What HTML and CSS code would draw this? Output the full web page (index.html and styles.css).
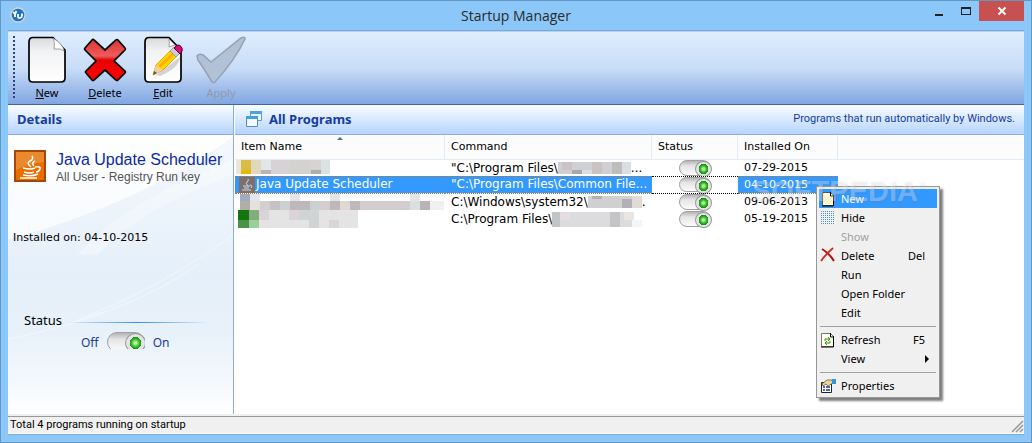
FILE: index.html
```html
<!DOCTYPE html>
<html lang="en">
<head>
  <meta charset="UTF-8" />
  <meta name="viewport" content="width=device-width, initial-scale=1.0" />
  <title>Startup Manager</title>
  <link rel="stylesheet" href="styles.css">
</head>
<body>
  <div class="window">
    <header class="titlebar">
      <svg class="app-icon" width="16" height="16" viewBox="0 0 16 16">
        <circle cx="8" cy="8" r="7.8" fill="#d5d2cd"/>
        <circle cx="8" cy="8" r="6.3" fill="#1b73c9"/>
        <path d="M3 5l2 2.2L6.500 4M5 7v3M8 7v2.500q0 2 2 1.500t2-2V6.500" fill="none" stroke="#fff" stroke-width="1.800"/>
      </svg>
      <h1>Startup Manager</h1>
      <div class="window-buttons">
        <button class="win-btn" aria-label="Minimize"><svg width="8" height="10"><path d="M0 8h8v2H0z" fill="#222"/></svg></button>
        <button class="win-btn" aria-label="Maximize"><svg width="10" height="8"><path d="M0 0h10v8H0zM1 2v5h8V2z" fill="#222" fill-rule="evenodd"/></svg></button>
        <button class="win-btn close" aria-label="Close"><svg width="8" height="8"><path d="M0.500 0.500l7 7M7.500 0.500l-7 7" stroke="#fff" stroke-width="1.900"/></svg></button>
      </div>
    </header>

    <div class="client">
      <nav class="toolbar">
        <button class="tool">
          <svg width="40" height="48" viewBox="0 0 40 48">
            <defs><linearGradient id="paper" x1="0" y1="0" x2="0" y2="1"><stop offset="0" stop-color="#d9dadb"/><stop offset=".3" stop-color="#f1f2f3"/><stop offset="1" stop-color="#fff"/></linearGradient></defs>
            <path d="M6 1.500h20L38 14v28q0 4-4 4H6q-4 0-4-4V6q0-4.500 4-4.500z" fill="url(#paper)" stroke="#000" stroke-width="1.700"/>
            <path d="M26 2q2 3 1 11q7-1 10 2q-1-7-11-13z" fill="#fff" stroke="#8a8d91" stroke-width=".8"/>
          </svg>
          <span><u>N</u>ew</span>
        </button>
        <button class="tool">
          <svg width="44" height="48" viewBox="0 0 44 48">
            <defs><linearGradient id="red" x1="0" y1="0" x2="0" y2="1"><stop offset="0" stop-color="#d33"/><stop offset=".4" stop-color="#ed5c5c"/><stop offset=".5" stop-color="#e60505"/><stop offset="1" stop-color="#f00"/></linearGradient></defs>
            <path d="M2 12L9 4q1-1 2 0l11 10L33 4q1-1 2 0l7 8q1 1 0 2L31 25l11 10q1 1 0 2l-7 7q-1 1-2 0L22 34 11 44q-1 1-2 0l-6-7q-1-1 0-2l10-10L2 14q-1-1 0-2z" fill="url(#red)" stroke="#000" stroke-width="1.700"/>
          </svg>
          <span><u>D</u>elete</span>
        </button>
        <button class="tool">
          <svg width="40" height="48" viewBox="0 0 40 48">
            <path d="M6 1.500h20L38 14v28q0 4-4 4H6q-4 0-4-4V6q0-4.500 4-4.500z" fill="url(#paper)" stroke="#000" stroke-width="1.700"/>
            <path d="M25 2q2 2 1 9l6-2z" fill="#fff" stroke="#8a8d91" stroke-width=".8"/>
            <path d="M13 39l24-18q-1 11-20 19z" fill="#bbb" opacity=".6"/>
            <path d="M10 39l3-10L28 14l6 6L20 34z" fill="#ffd400" stroke="#d79b00" stroke-width=".8"/>
            <path d="M16 31l15-14" stroke="#ffb300" stroke-width="3"/>
            <path d="M10 39l3-10 7 5z" fill="#efcf9d"/><path d="M10 39l1-4 3 2z" fill="#555"/>
            <path d="M27 15l4-4 6 6-4 4z" fill="#c5ccd7" stroke="#888" stroke-width=".7"/>
            <path d="M31 12q4-5 7-1.500t-1 7.500z" fill="#e00b7a" stroke="#47002a"/>
          </svg>
          <span><u>E</u>dit</span>
        </button>
        <button class="tool" disabled>
          <svg width="48" height="48" viewBox="0 0 48 48">
            <path d="M1 24L0 20q2-3 6-1l8 7L44 2q4-2 4 1Q38 24 18 46q-2 1-3 0Q8 34 1 24z" fill="#b3c1d6" stroke="#97a3b4" stroke-width="1.600"/>
          </svg>
          <span>Apply</span>
        </button>
      </nav>

      <div class="panels">
        <aside class="details">
          <h2 class="panel-head">Details</h2>
          <div class="details-body">
            <svg class="swoosh" viewBox="0 0 225 280" preserveAspectRatio="none">
              <defs><linearGradient id="sky" x1="0" y1="0" x2="0" y2="1"><stop offset="0" stop-color="#dceaf7" stop-opacity=".3"/><stop offset=".5" stop-color="#dceaf7" stop-opacity=".6"/><stop offset="1" stop-color="#dceaf7" stop-opacity="0"/></linearGradient></defs>
              <path d="M0 105Q130 70 225 2V280H0z" fill="url(#sky)"/>
              <path d="M70 120Q110 70 225 25V40Q130 75 90 120z" fill="#fff" opacity=".3"/>
              <path d="M60 190Q160 150 225 100M0 205Q120 180 190 130" fill="none" stroke="#fff" opacity=".4"/>
            </svg>
            <div class="program">
              <svg width="32" height="32" viewBox="0 0 32 32">
                <rect x="1" y="1" width="30" height="30" fill="#e76f00" stroke="#a84508" stroke-width="2"/>
                <path d="M2 2h28v10Q14 14 2 20z" fill="#fff" opacity=".18"/>
                <path d="M18 6q2 3-2 5t1 6M21 11q-4 2-1 5M9 18q8 2 12 0M10 22q6 2 10 0M21 17q6-1 5 2t-4 3M9 25q8 2 15-1M6 28h17" fill="none" stroke="#fff" stroke-width="1.500"/>
              </svg>
              <div>
                <h3>Java Update Scheduler</h3>
                <p>All User - Registry Run key</p>
              </div>
            </div>
            <p class="installed">Installed on: 04-10-2015</p>
            <div class="status-head"><span>Status</span><i></i></div>
            <label class="switch-row">Off <span class="clip"><input type="checkbox" class="switch big" aria-label="Status" checked></span> On</label>
          </div>
        </aside>

        <main class="programs">
          <div class="panel-head">
            <svg width="16" height="16" viewBox="0 0 16 16">
              <path d="M4.500.5h11v9h-11z" fill="#e9f6ff" stroke="#5a9fd0"/><path d="M4 0h12v3H4z" fill="#4ba4de"/>
              <path d="M.5 5.500h11v10H.5z" fill="#f3faff" stroke="#5e8dae"/><path d="M0 5h12v3H0z" fill="#41a2dc"/>
            </svg>
            <h2>All Programs</h2>
            <span class="hint">Programs that run automatically by Windows.</span>
          </div>
          <table>
            <colgroup><col class="c-name"><col class="c-command"><col class="c-status"><col class="c-date"><col></colgroup>
            <thead>
              <tr><th class="sorted">Item Name</th><th>Command</th><th>Status</th><th>Installed On</th><th></th></tr>
            </thead>
            <tbody>
              <tr>
                <td class="name"><svg class="mosaic" width="94" height="16">
                  <path d="M0 0h5v14H0z" fill="#ebe6db"/><path d="M5 0h10v10H5z" fill="#d9bd43"/><path d="M5 10h10v4H5z" fill="#e7b900"/><path d="M15 0h10v14H15z" fill="#dfd8bd"/><path d="M25 0h10v10H25z" fill="#e3e6e8"/><path d="M25 10h10v4H25z" fill="#bbb4b6"/><path d="M35 0h20v14H35z" fill="#d7d2d5"/><path d="M55 0h20v14H55z" fill="#d4d2d1"/><path d="M75 0h10v10H75z" fill="#d7d3d2"/><path d="M75 10h10v4H75z" fill="#adadad"/><path d="M85 0h9v14h-9z" fill="#dce1e4"/>
                </svg></td>
                <td>"C:\Program Files\<svg class="mosaic" width="73" height="12"><path d="M0 0h73v12H0z" fill="#d0d0d4"/><path d="M4 0h10v8H4zM34 0h10v12H34z" fill="#cbc2c3"/><path d="M14 8h10v4H14z" fill="#a9a9ac"/><path d="M24 8h10v4H24zM64 0h9v12h-9z" fill="#d9dfe2"/><path d="M54 0h10v12H54z" fill="#bdbdbd"/></svg>...</td>
                <td class="state"><input type="checkbox" class="switch" aria-label="First program status" checked></td>
                <td>07-29-2015</td><td></td>
              </tr>
              <tr class="selected">
                <td class="name"><svg class="java" width="16" height="16" viewBox="0 0 16 16"><path d="M0 0h16v16H0z" fill="#806e6b"/><path d="M9 2q1 2-1 3t1 4M4 9h7M5 11h5M11 8q3 0 1 3M3 13h9" fill="none" stroke="#c6def7"/></svg><span>Java Update Scheduler</span></td>
                <td>"C:\Program Files\Common File...</td>
                <td class="state"><input type="checkbox" class="switch" aria-label="Java Update Scheduler status" checked></td>
                <td>04-10-2015</td><td></td>
              </tr>
              <tr>
                <td class="name"><svg class="mosaic long" width="208" height="16">
                  <path d="M4 0h10v7H4z" fill="#9eabc1"/><path d="M4 7h10v9H4z" fill="#b1aea8"/><path d="M14 0h10v7H14z" fill="#e2e5e9"/><path d="M14 7h10v9H14z" fill="#e6e1dc"/><path d="M24 7h10v9H24z" fill="#d3cfd0"/><path d="M34 7h10v9H34z" fill="#c7c1c5"/><path d="M44 7h10v9H44zM74 7h10v9H74zM164 7h10v9h-10z" fill="#ccd0d2"/><path d="M54 7h20v9H54zM94 7h10v9H94zM114 7h10v9h-10z" fill="#beb7bb"/><path d="M84 7h10v9H84zM124 7h60v9h-60z" fill="#d3cdd2"/><path d="M104 7h10v9h-10z" fill="#e0d9d3"/><path d="M174 7h10v9h-10z" fill="#d9e0e3"/><path d="M184 7h10v9h-10z" fill="#b9b3b7"/><path d="M194 7h14v9h-14z" fill="#eff0f1"/><path d="M54 0h10v7H54zM94 0h10v7H94zM174 0h10v7h-10z" fill="#e5e3e4"/>
                </svg></td>
                <td>C:\Windows\system32\<svg class="mosaic" width="54" height="12"><path d="M0 0h54v12H0z" fill="#d1d0d1"/><path d="M4 0h10v3H4zM34 3h10v9H34z" fill="#b5b0b5"/><path d="M44 0h10v12H44z" fill="#e1dbd7"/></svg>.</td>
                <td class="state"><input type="checkbox" class="switch" aria-label="Third program status" checked></td>
                <td>09-06-2013</td><td></td>
              </tr>
              <tr>
                <td class="name"><svg class="mosaic tall" width="122" height="18">
                  <path d="M2 0h11v10H2z" fill="#16740f"/><path d="M2 10h11v8H2z" fill="#469444"/><path d="M13 0h10v10H13z" fill="#82ad7d"/><path d="M13 10h10v8H13z" fill="#9cce9a"/><path d="M23 0h99v18H23z" fill="#e4e4e5"/><path d="M23 0h10v10H23zM53 0h10v10H53zM93 10h10v8H93z" fill="#d9d4d8"/><path d="M63 0h20v10H63zM73 10h10v8H73z" fill="#d1d4d5"/>
                </svg></td>
                <td>C:\Program Files\<svg class="mosaic tall" width="90" height="15"><path d="M0 0h82v8H0zM0 8h90v7H0z" fill="#dcdcdf"/><path d="M0 0h8v15H0zM58 0h10v15H58z" fill="#c4c4c7"/><path d="M8 0h10v8H8z" fill="#e5dddf"/><path d="M72 0h10v8H72z" fill="#e8e5e2"/><path d="M80 8h10v7H80z" fill="#f3f6f8"/></svg></td>
                <td class="state"><input type="checkbox" class="switch" aria-label="Fourth program status" checked></td>
                <td>05-19-2015</td><td></td>
              </tr>
            </tbody>
          </table>
        </main>
      </div>

      <footer class="statusbar">Total 4 programs running on startup
        <svg width="12" height="12"><path d="M1 12L12 1M5 12l7-7M9 12l3-3" stroke="#999" stroke-width="1.500"/></svg>
      </footer>
    </div>

    <div class="menu" role="menu">
      <button class="active" role="menuitem"><svg width="16" height="16" viewBox="0 0 16 16"><path d="M2.500 1.500h8l3 3v10h-11z" fill="#fffde0" stroke="#555"/><path d="M10.500 1v4h4M13.500 4v11H2" fill="none" stroke="#000"/><path d="M4 11l6-6M5 13l7-7M8 13l4-4" stroke="#f2eb95"/></svg>New</button>
      <button role="menuitem"><svg width="16" height="16" viewBox="0 0 16 16"><path d="M1.500 1v14M3.500 1v14M5.500 1v14M7.500 1v14M9.500 1v14M11.500 1v14M13.500 1v14" stroke="#4f91b8" stroke-dasharray="1 1"/></svg>Hide</button>
      <button role="menuitem" disabled><svg width="16" height="16"></svg>Show</button>
      <button role="menuitem"><svg width="16" height="16" viewBox="0 0 16 16"><path d="M2 1q7 4 12 12" fill="none" stroke="#b3130a" stroke-width="2"/><path d="M13 0Q6 6 1 13" fill="none" stroke="#d42a1b" stroke-width="1.800"/></svg>Delete<kbd>Del</kbd></button>
      <button role="menuitem"><svg width="16" height="16"></svg>Run</button>
      <button role="menuitem"><svg width="16" height="16"></svg>Open Folder</button>
      <button role="menuitem"><svg width="16" height="16"></svg>Edit</button>
      <hr>
      <button role="menuitem"><svg width="16" height="16" viewBox="0 0 16 16"><path d="M1.500 1.500h9l3 3v10h-12z" fill="#fffff0" stroke="#777"/><path d="M10.500 1v4h3M13.500 4v11H1" fill="none" stroke="#000"/><path d="M5 9V7h4M8 5l2 2-2 2M10 9v2H6M7 9l-2 2 2 2" fill="none" stroke="#388a12"/></svg>Refresh<kbd>F5</kbd></button>
      <button role="menuitem"><svg width="16" height="16"></svg>View<svg class="arrow" width="4" height="8"><path d="M0 0l4 4-4 4z"/></svg></button>
      <hr>
      <button role="menuitem"><svg width="16" height="16" viewBox="0 0 16 16"><path d="M1.500 4.500h10v10h-10z" fill="#fff" stroke="#222"/><path d="M3 9h2M6 9h4M3 12h2M6 12h4" stroke="#1634a5" stroke-width="1.500"/><path d="M2 6l5-4h5l1 3-5 3-2-2-3 2z" fill="#e6d7a0" stroke="#765f25" stroke-width=".8"/><path d="M12 1h4v5h-4z" fill="#2c95e6"/></svg>Properties</button>
    </div>
    <div class="watermark">SOFTPEDIA<sup>®</sup></div>
  </div>
</body>
</html>
```
FILE: styles.css
```css
* {
  box-sizing: border-box;
}
body {
  margin: 0;
  font-family: "DejaVu Sans", Verdana, sans-serif;
  font-size: 12px;
  color: #000;
}
h1, h2, h3, p {
  margin: 0;
  font-weight: normal;
}
button {
  padding: 0;
  border: none;
  background: none;
  color: inherit;
  font: inherit;
}
svg {
  flex: none;
  overflow: visible;
}

.window {
  position: relative;
  display: flex;
  flex-direction: column;
  min-height: 100vh;
  padding: 0 7px 7px;
  border: 1px solid #6496c4;
  background: #8cc7fa;
}
.titlebar {
  display: grid;
  grid-template-columns: 1fr auto 1fr;
  height: 29px;
}
.app-icon {
  margin: 6px 2px;
}
.titlebar h1 {
  font: 14px/29px "Open Sans", "Segoe UI", sans-serif;
  color: #2b2b2b;
}
.window-buttons {
  display: flex;
  justify-content: flex-end;
}
.win-btn {
  display: flex;
  align-items: center;
  justify-content: center;
  width: 27px;
  height: 20px;
}
.win-btn.close {
  width: 45px;
  background: #c75050;
}

.client {
  display: flex;
  flex: 1;
  flex-direction: column;
  border: 1px solid #7ba9d8;
  border-width: 1px 0;
  background: #fff;
}
.toolbar {
  position: relative;
  display: flex;
  height: 74px;
  padding: 4px 0 0 10px;
  border-top: 1px solid #b7d0ef;
  border-bottom: 1px solid #3f66a8;
  background: linear-gradient(#dfedff, #c9ddf7 50%, #81a6e2);
}
.toolbar::before {
  content: "";
  position: absolute;
  left: 5px;
  top: 4px;
  bottom: 6px;
  width: 2px;
  background: repeating-linear-gradient(#274787 0 2px, transparent 2px 4px);
}
.tool {
  display: flex;
  flex-direction: column;
  align-items: center;
  width: 58px;
  font: 11px/18px "Noto Sans", "Segoe UI", sans-serif;
}
.tool svg {
  height: 48px;
}
.tool:disabled {
  color: #929aa8;
}

.panels {
  display: grid;
  flex: 1;
  grid-template-columns: 226px 1fr;
  column-gap: 1px;
}
.details {
  display: flex;
  flex-direction: column;
  border-right: 1px solid #8fabe6;
}
.panel-head {
  display: flex;
  align-items: center;
  gap: 7px;
  height: 30px;
  padding: 0 9px 2px;
  border-bottom: 1px solid #8fabe8;
  background: linear-gradient(#fafdff, #b5d4ff);
  color: #173da0;
  font: bold 13px/16px "Noto Sans", Tahoma, sans-serif;
}
.programs .panel-head {
  padding-left: 11px;
}
.panel-head h2 {
  font: inherit;
}
.hint {
  margin-left: auto;
  font: 11px/16px Roboto, Tahoma, sans-serif;
}
.details-body {
  position: relative;
  flex: 1;
  background: linear-gradient(#fff, #f5f9fe 45%, #eef5fc 70%, #fff);
}
.swoosh {
  position: absolute;
  inset: 0;
  width: 100%;
  height: 100%;
}
.program {
  position: relative;
  display: flex;
  gap: 10px;
  padding: 15px 0 0 6px;
  white-space: nowrap;
}
.program h3 {
  font: 16px/20px "Liberation Sans", Arial, sans-serif;
  color: #0a2ba3;
}
.program p {
  font: 12px/14px "Liberation Sans", Arial, sans-serif;
  color: #555;
}
.installed {
  position: relative;
  margin: 46px 0 0 5px;
  font-size: 11px;
  line-height: 16px;
}
.status-head {
  position: relative;
  display: flex;
  align-items: center;
  gap: 4px;
  margin: 64px 24px 0 16px;
  font: 13px/20px "Noto Sans", "Segoe UI", sans-serif;
}
.status-head i {
  flex: 1;
  height: 1px;
  margin-top: 4px;
  background: linear-gradient(90deg, rgba(43, 145, 239, 0), #2b91ef, rgba(43, 145, 239, 0));
}
.switch-row {
  position: relative;
  display: flex;
  align-items: center;
  gap: 8px;
  margin: 2px 0 0 73px;
  font: 12px/22px "Noto Sans", "Segoe UI", sans-serif;
  color: #173da0;
}

.switch {
  appearance: none;
  display: block;
  width: 32px;
  height: 16px;
  margin: 0;
  border: 1px solid #a0a0a0;
  border-radius: 8px;
  background: linear-gradient(#b5b5b5, #e5e5e5 35%, #fbfbfb);
}
.switch::before {
  content: "";
  display: block;
  width: 15px;
  height: 14px;
  margin-left: 15px;
  border: 1px solid #999;
  border-radius: 50%;
  background: radial-gradient(circle at 50% 50%, #b8f8a0 0 1px, #38b929 3px, #168c16 5px, #e3e3e3 5px);
}
.clip {
  align-self: flex-start;
  height: 17px;
  overflow: hidden;
}
.switch.big {
  width: 38px;
  height: 20px;
  border-radius: 10px;
}
.switch.big::before {
  width: 19px;
  height: 18px;
  margin-left: 17px;
  background: radial-gradient(circle at 50% 50%, #b8f8a0 0 1px, #38b929 4px, #168c16 6px, #e3e3e3 6px);
}

table {
  width: 100%;
  table-layout: fixed;
  border-collapse: collapse;
}
.c-name {
  width: 210px;
}
.c-command {
  width: 207px;
}
.c-status {
  width: 86px;
}
.c-date {
  width: 100px;
}
th {
  position: relative;
  height: 24px;
  padding: 0 0 0 6px;
  border-bottom: 1px solid #e2ecf8;
  background: #fcfcfc;
  box-shadow: inset -1px 0 #e2ecf8;
  font-size: 11px;
  font-weight: normal;
  text-align: left;
}
th:last-child {
  box-shadow: none;
}
.sorted::after {
  content: "";
  position: absolute;
  left: 102px;
  top: 2px;
  border: 3px solid transparent;
  border-top: none;
  border-bottom: 3px solid #43758f;
}
td {
  height: 17px;
  padding: 0 0 0 6px;
  line-height: 16px;
  white-space: nowrap;
}
td:nth-child(4) {
  font-size: 11px;
}
td.name {
  padding-left: 1px;
}
.mosaic {
  vertical-align: middle;
}
.name .mosaic {
  display: block;
}
td .mosaic {
  margin: -2px 0;
}
td.state {
  padding-left: 27px;
}
.selected td {
  height: 17px;
  border: 1px dotted #b87533;
  border-width: 1px 0;
  background: #3399ff;
  color: #fff;
  line-height: 15px;
}
.selected td.name {
  padding-left: 4px;
}
.selected .name > * {
  display: inline-block;
  vertical-align: top;
}
.selected .java {
  margin-right: 1px;
}
.selected td.state {
  border-color: #000;
  background: #fff;
}
.selected .switch {
  height: 15px;
}
.selected td:last-child {
  border: none;
  background: none;
}

.statusbar {
  display: flex;
  align-items: flex-end;
  justify-content: space-between;
  height: 20px;
  padding: 0 1px 1px 2px;
  border-top: 2px solid #f0f0f0;
  border-bottom: 1px solid #fff;
  box-shadow: inset 0 1px #999;
  background: #f0f0f0;
  font: 11px/15px Roboto, Tahoma, sans-serif;
}

.menu {
  position: absolute;
  left: 815px;
  top: 185px;
  width: 124px;
  padding: 2px;
  border: 1px solid #979797;
  background: #f0f0f0;
  box-shadow: 3px 3px 2px rgba(0, 0, 0, 0.5);
}
.menu button {
  display: flex;
  align-items: center;
  gap: 5px;
  width: 100%;
  height: 19px;
  padding: 0 12px 0 1px;
  font: 11px/17px "Noto Sans", "Segoe UI", sans-serif;
}
.menu .active {
  background: #3399ff;
  color: #fff;
}
.menu button:disabled {
  color: #a0a0a0;
}
.menu hr {
  height: 1px;
  margin: 4px 1px 3px;
  border: none;
  background: #a0a0a0;
}
.menu kbd {
  margin-left: auto;
  font: inherit;
}
.menu .arrow {
  margin: 0 -4px 0 auto;
}
.watermark {
  position: absolute;
  left: 751px;
  top: 172px;
  color: rgba(255, 255, 255, 0.28);
  font: bold 29px/36px "Liberation Sans", Arial, sans-serif;
  text-shadow: 1px 1px 2px rgba(100, 100, 100, 0.15);
  pointer-events: none;
}
.watermark sup {
  font-size: 9px;
  vertical-align: 13px;
  line-height: 0;
}
```
